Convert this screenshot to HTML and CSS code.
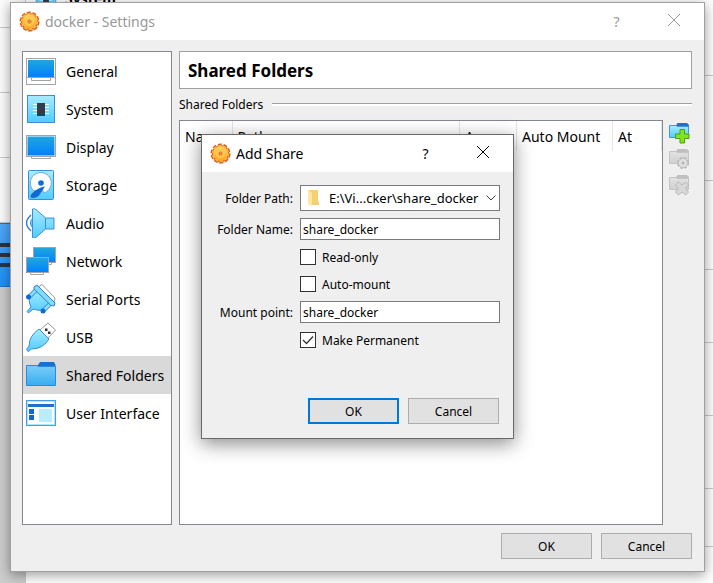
FILE: index.html
```html
<!DOCTYPE html>
<html lang="en">
<head>
  <meta charset="UTF-8">
  <meta name="viewport" content="width=device-width, initial-scale=1.0">
  <title>docker - Settings</title>
  <link rel="stylesheet" href="styles.css">
</head>
<body>
  <!-- shared icon shapes -->
  <svg class="defs" aria-hidden="true">
    <defs>
      <linearGradient id="screen" x1="0" y1="0" x2="0" y2="1">
        <stop offset="0" stop-color="#20a8dc"/><stop offset="1" stop-color="#0080ff"/>
      </linearGradient>
      <linearGradient id="sky" x1="0" y1="0" x2="0" y2="1">
        <stop offset="0" stop-color="#a8ecff"/><stop offset="1" stop-color="#50ccff"/>
      </linearGradient>
      <linearGradient id="folder" x1="0" y1="0" x2="0" y2="1">
        <stop offset="0" stop-color="#7cccf6"/><stop offset="1" stop-color="#36aef0"/>
      </linearGradient>
      <linearGradient id="gray" x1="0" y1="0" x2="0" y2="1">
        <stop offset="0" stop-color="#e2e2e2"/><stop offset="1" stop-color="#d0d0d0"/>
      </linearGradient>
      <linearGradient id="gold" x1="0" y1="0" x2="0" y2="1">
        <stop offset="0" stop-color="#ffd860"/><stop offset="1" stop-color="#ffa428"/>
      </linearGradient>
    </defs>
    <symbol id="gear" viewBox="0 0 20 20">
      <circle cx="10.500" cy="11" r="9" fill="#a8a09c" opacity=".4"/>
      <circle cx="10" cy="10" r="8.200" fill="#dc5c14"/>
      <circle cx="10" cy="10" r="8.600" fill="none" stroke="#dc5c14" stroke-width="1.800" stroke-dasharray="3.600 1.800"/>
      <circle cx="10" cy="10" r="7.200" fill="url(#gold)"/>
      <circle cx="10" cy="10" r="7.400" fill="none" stroke="#ffb840" stroke-width="1.600" stroke-dasharray="2.800 1.850"/>
      <circle cx="10" cy="10" r="4.500" fill="#ffcc50" opacity=".7"/>
      <circle cx="10" cy="10" r="1.500" fill="#e89860" stroke="#d06418" stroke-width=".8"/>
    </symbol>
    <symbol id="chip" viewBox="0 0 30 30">
      <rect x="1.500" y="1.500" width="27" height="27" fill="url(#sky)" stroke="#3c8cdc"/>
      <path d="M7 10.500h16M7 13.500h16M7 16.500h16M7 19.500h16" stroke="#f0fcff"/>
      <rect x="11" y="9" width="8" height="13" fill="#343c48"/>
    </symbol>
  </svg>

  <!-- manager window behind the dialogs -->
  <div class="manager" aria-hidden="true">
    <div class="machines">
      <div class="machine"></div>
      <div class="machine"></div>
      <div class="machine"></div>
      <div class="machine"></div>
      <div class="machine selected"><i></i><i></i><i></i></div>
    </div>
    <div class="details">
      <div class="detail-title"><svg class="detail-icon"><use href="#chip"/></svg><b>System</b></div>
      <div class="detail detail-a"></div>
      <div class="detail detail-b"></div>
      <div class="detail detail-c"></div>
      <div class="detail detail-d"></div>
      <div class="detail detail-e"></div>
      <div class="detail detail-f"></div>
    </div>
  </div>

  <main class="settings">
    <header class="titlebar inactive">
      <svg class="title-icon"><use href="#gear"/></svg>
      <h1 class="title">docker - Settings</h1>
      <button class="title-button" type="button">?</button>
      <button class="title-button" type="button" aria-label="Close">
        <svg class="cross" viewBox="0 0 14 14"><path d="M1 1l12 12M13 1L1 13"/></svg>
      </button>
    </header>

    <div class="content">
      <nav class="categories">
        <a class="category" href="#general">
          <svg class="cat-icon" viewBox="0 0 30 30"><rect x=".5" y="2.500" width="29" height="26" fill="#fff" stroke="#a4a4a4"/><rect x="2" y="4" width="26" height="17" fill="url(#screen)"/><path d="M1 21.500h28M5.500 22v2.500h19V22" fill="none" stroke="#a4a4a4"/></svg>
          General
        </a>
        <a class="category" href="#system"><svg class="cat-icon"><use href="#chip"/></svg>System</a>
        <a class="category" href="#display">
          <svg class="cat-icon" viewBox="0 0 30 30"><path d="M5.500 23v3.500h19V23" fill="#fff" stroke="#a4a4a4"/><rect x=".5" y="3.500" width="29" height="21" fill="#fff" stroke="#a4a4a4"/><rect x="1.500" y="4.500" width="27" height="19" fill="url(#screen)"/></svg>
          Display
        </a>
        <a class="category" href="#storage">
          <svg class="cat-icon" viewBox="0 0 30 30"><rect x="2.500" y=".5" width="25" height="29" rx="1" fill="url(#sky)" stroke="#3c8cdc"/><path d="M8 21a10.500 10.500 0 1 1 10 2L16 19z" fill="#fff" stroke="#70a8d8"/><circle cx="15" cy="13" r="2.800" fill="#1070d0"/><path d="M19 16.500q-7 1-13 7-3 3 0 4.500 6 0 8-4z" fill="#1068d0"/></svg>
          Storage
        </a>
        <a class="category" href="#audio">
          <svg class="cat-icon" viewBox="0 0 30 30"><path d="M7 10q-5 5 0 10" fill="url(#sky)" stroke="#2c80d8"/><path d="M5 7q-9 8 0 16" fill="none" stroke="#2c80d8" stroke-width="1.500"/><path d="M6.500 1q2-1 4 1l9 8h8.500v11h-8.500l-9 8q-2 2-4 .5z" fill="url(#sky)" stroke="#3c8cdc" stroke-linejoin="round"/><path d="M19.500 10v11" stroke="#3c8cdc"/></svg>
          Audio
        </a>
        <a class="category" href="#network">
          <svg class="cat-icon" viewBox="0 0 30 30"><path d="M12.500 16v2.500h13V16" fill="#fff" stroke="#a4a4a4"/><rect x="7.500" y="1.500" width="22" height="15" fill="url(#screen)" stroke="#a4a4a4"/><path d="M4.500 26v2.500h13V26" fill="#fff" stroke="#a4a4a4"/><rect x=".5" y="11.500" width="22" height="15" fill="url(#screen)" stroke="#a4a4a4"/></svg>
          Network
        </a>
        <a class="category" href="#serial-ports">
          <svg class="cat-icon" viewBox="0 0 30 30"><path d="M12 3l4-2.500L29 14l-1 6z" fill="#fff" stroke="#989898"/><path d="M10 5L3 13q0 7 2 10l-4 4.500L2.500 29 7 25q5 2 10 1l8-6z" fill="url(#sky)" stroke="#3c8cdc" stroke-linejoin="round"/><path d="M10 6l-7 7M24 20l-7 7" stroke="#3c8cdc" stroke-width="4.500"/><path d="M10 6l-6 6M24 20l-6 6" stroke="#88e0ff" stroke-width="2.500"/><path d="M8 3l3-2 18 18-1 3-3-.5L8 5z" fill="#80dcff" stroke="#2c80d8" stroke-linejoin="round"/><circle cx="2.500" cy="13" r="2.500" fill="#1068d0"/><circle cx="17" cy="27" r="2.500" fill="#1068d0"/></svg>
          Serial Ports
        </a>
        <a class="category" href="#usb">
          <svg class="cat-icon" viewBox="0 0 30 30"><path d="M14 8l8-7 7.500 7-7.500 8z" fill="#fff" stroke="#989898"/><path d="M19 6.500h2.500V9H19zM22 9.500h2.500V12H22z" fill="#303030"/><path d="M13 7Q3 14 3 24l-2.500 3.500L2 29.500 5.500 27Q17 27 23 17z" fill="url(#sky)" stroke="#3c8cdc" stroke-linejoin="round"/></svg>
          USB
        </a>
        <a class="category current" href="#shared-folders">
          <svg class="cat-icon" viewBox="0 0 30 30"><path d="M10.500 7l3.500-5h14l1.500 3v3z" fill="#1870d0"/><path d="M.5 5.500h10.500l1.500 1h17v19H.5z" fill="url(#folder)" stroke="#2c88dc"/></svg>
          Shared Folders
        </a>
        <a class="category" href="#user-interface">
          <svg class="cat-icon" viewBox="0 0 30 30"><rect x=".5" y="2.500" width="29" height="25" fill="#fff" stroke="#4c9ce4"/><rect x="1.500" y="3.500" width="27" height="23" fill="none" stroke="#a8e8ff"/><path d="M2 6h26v3H2z" fill="#2070d0"/><path d="M3 11h5v5H3zM3 17h5v5H3z" fill="#1068d0"/><rect x="13" y="11" width="13" height="13" fill="#b8ecff"/></svg>
          User Interface
        </a>
      </nav>

      <section class="page">
        <h2 class="page-title">Shared Folders</h2>
        <div class="group-title">Shared Folders</div>
        <div class="folders">
          <div class="folder-list">
            <table class="folder-table">
              <thead>
                <tr><th class="col-name">Name</th><th>Path</th><th class="col-access">Access</th><th class="col-auto">Auto Mount</th><th class="col-at">At</th></tr>
              </thead>
            </table>
          </div>
          <div class="tools">
            <button class="tool" type="button" aria-label="Add share">
              <svg viewBox="0 0 22 22"><path class="tab" d="M7.500 4l2-3h9.500l2 2v3h-12z"/><path class="front" d="M1.500 3.500h6.500l1.500 1h11v11h-19z"/><path d="M12 7.500h4.500v4.500h4.500v4.500h-4.500v4.500H12v-4.500H7.500V12H12z" fill="#84e41c" stroke="#48a010"/></svg>
            </button>
            <button class="tool" type="button" aria-label="Edit share" disabled>
              <svg viewBox="0 0 22 22"><path class="tab" d="M7.500 4l2-3h9.500l2 2v3h-12z"/><path class="front" d="M1.500 3.500h6.500l1.500 1h11v11h-19z"/><circle cx="15" cy="15" r="5" fill="#dedede" stroke="#b4b4b4" stroke-width="2" stroke-dasharray="2.400 1.527"/><circle cx="15" cy="15" r="4.600" fill="#dedede" stroke="#bcbcbc" stroke-width=".6"/><circle cx="15" cy="15" r="1.300" fill="#b0b0b0"/></svg>
            </button>
            <button class="tool" type="button" aria-label="Remove share" disabled>
              <svg viewBox="0 0 22 22"><path class="tab" d="M7.500 4l2-3h9.500l2 2v3h-12z"/><path class="front" d="M1.500 3.500h6.500l1.500 1h11v11h-19z"/><path d="M10.500 8l3.500 3 3.500-3 3 3-3 3.500 3 3.500-3 3-3.500-3-3.500 3-3-3 3-3.500-3-3.500z" fill="#d8d8d8" stroke="#b8b8b8"/></svg>
            </button>
          </div>
        </div>
      </section>
    </div>

    <footer class="actions">
      <button class="button" type="button">OK</button>
      <button class="button" type="button">Cancel</button>
    </footer>
  </main>

  <form class="dialog" role="dialog" aria-labelledby="dialogTitle">
    <header class="titlebar">
      <svg class="title-icon"><use href="#gear"/></svg>
      <h2 class="title" id="dialogTitle">Add Share</h2>
      <button class="title-button" type="button">?</button>
      <button class="title-button" type="button" aria-label="Close">
        <svg class="cross" viewBox="0 0 14 14"><path d="M1 1l12 12M13 1L1 13"/></svg>
      </button>
    </header>
    <div class="fields">
      <label class="label" for="folderPath">Folder Path:</label>
      <div class="path">
        <svg class="path-icon" viewBox="0 0 14 16"><path d="M2 0h9v11l1 1v3H2z" fill="#f4d070"/><path d="M1 0l4 3v13l-4-2z" fill="#ffe8a0"/></svg>
        <select class="input path-select" id="folderPath"><option>E:\Vi...cker\share_docker</option></select>
        <svg class="path-arrow" viewBox="0 0 10 6"><path d="M.5.5L5 5 9.500.5"/></svg>
      </div>
      <label class="label" for="folderName">Folder Name:</label>
      <input class="input" type="text" id="folderName" value="share_docker">
      <label class="check"><input type="checkbox">Read-only</label>
      <label class="check"><input type="checkbox">Auto-mount</label>
      <label class="label" for="mountPoint">Mount point:</label>
      <input class="input" type="text" id="mountPoint" value="share_docker">
      <label class="check"><input type="checkbox" checked>Make Permanent</label>
    </div>
    <footer class="actions">
      <button class="button default" type="button">OK</button>
      <button class="button" type="button">Cancel</button>
    </footer>
  </form>
</body>
</html>
```

FILE: styles.css
```css
* {
  box-sizing: border-box;
}
body {
  display: flex;
  min-height: 100vh;
  margin: 0;
  padding: 2px 8px 11px 10px;
  overflow: hidden;
  background: #fafafa;
  font-family: "Noto Sans", sans-serif;
  font-size: 12px;
  color: #000;
}
h1, h2 {
  margin: 0;
}
.defs {
  position: absolute;
  width: 0;
  height: 0;
}

/* window behind */
.manager {
  position: absolute;
  inset: 0;
  display: flex;
  background: #fff;
}
.machines {
  width: 26px;
  border-right: 1px solid #c8c8c8;
  background: #cdcdcd;
}
.machine {
  height: 65px;
  border-bottom: 1px solid #c8c8c8;
  background: #fcfcfc;
}
.machine:first-child {
  height: 28px;
}
.machine.selected {
  display: flex;
  flex-direction: column;
  justify-content: center;
  gap: 6px;
  height: 64px;
  border-top: 1px solid #1478d0;
  border-bottom: 1px solid #1478d0;
  background: linear-gradient(#50a8f8, #1c90f8);
}
.machine i {
  height: 4px;
  background: #2c3440;
}
.details {
  flex: 1;
}
.detail-title {
  display: flex;
  align-items: end;
  gap: 8px;
  height: 8px;
  padding-left: 9px;
  font-size: 14px;
  line-height: 18px;
}
.detail-icon {
  width: 22px;
  height: 22px;
  flex: none;
}
.detail {
  border-bottom: 1px solid #c8c8c8;
}
.detail-a { height: 68px; }
.detail-b { height: 105px; }
.detail-c { height: 89px; }
.detail-d { height: 73px; }
.detail-e { height: 73px; }
.detail-f { height: 73px; }
.detail-f::after {
  content: "";
  display: block;
  height: 130px;
  border-bottom: 1px solid #c8c8c8;
}

/* windows */
.settings {
  position: relative;
  display: flex;
  flex: 1;
  flex-direction: column;
  border: 1px solid #a0a0a0;
  background: #efefef;
  box-shadow: 0 3px 12px rgba(0, 0, 0, 0.4);
}
.titlebar {
  display: flex;
  align-items: center;
  height: 37px;
  padding: 0 2px 0 8px;
  background: #fff;
}
.titlebar.inactive {
  color: #989898;
}
.title-icon {
  width: 21px;
  height: 21px;
}
.title {
  flex: 1;
  margin-left: 5px;
  font-size: 14px;
  font-weight: normal;
}
.title-button {
  width: 57px;
  height: 36px;
  padding: 0;
  border: 0;
  background: none;
  color: inherit;
  font: inherit;
  font-size: 14px;
}
.cross {
  width: 14px;
  height: 14px;
  fill: none;
  stroke: currentColor;
}
.content {
  display: flex;
  flex: 1;
  gap: 7px;
  padding: 11px 12px 0 11px;
}
.categories {
  width: 150px;
  border: 1px solid #828790;
  background: #fff;
}
.category {
  display: flex;
  align-items: center;
  gap: 10px;
  height: 38px;
  padding-left: 3px;
  color: #000;
  font-size: 14px;
  text-decoration: none;
  white-space: nowrap;
}
.category.current {
  background: #d9d9d9;
}
.cat-icon {
  flex: none;
  width: 30px;
  height: 30px;
}
.page {
  display: flex;
  flex: 1;
  flex-direction: column;
}
.page-title {
  height: 38px;
  padding-left: 8px;
  border: 1px solid #a0a0a0;
  background: #fff;
  font-size: 17px;
  line-height: 38px;
}
.group-title {
  display: flex;
  align-items: center;
  gap: 9px;
  height: 31px;
}
.group-title::after {
  content: "";
  flex: 1;
  height: 2px;
  border-top: 1px solid #a0a0a0;
  background: #fff;
}
.folders {
  display: flex;
  flex: 1;
}
.folder-list {
  flex: 1;
  border: 1px solid #828790;
  background: #fff;
}
.folder-table {
  width: 100%;
  table-layout: fixed;
  border-collapse: collapse;
  font-size: 14px;
}
.folder-table th {
  height: 30px;
  padding: 0 0 0 5px;
  border-right: 1px solid #e5e5e5;
  font-weight: normal;
  text-align: left;
}
.col-name { width: 52px; }
.col-access { width: 57px; }
.col-auto { width: 96px; }
.col-at { width: 49px; }
.tools {
  display: flex;
  flex-direction: column;
  gap: 4px;
  width: 29px;
  padding: 2px 0 0 5px;
}
.tool {
  width: 22px;
  height: 22px;
  padding: 0;
  border: 0;
  background: none;
}
.tool svg {
  display: block;
}
.tab {
  fill: #2070d0;
}
.front {
  fill: url(#sky);
  stroke: #3c98e0;
}
.tool:disabled .tab {
  fill: #c0c0c0;
}
.tool:disabled .front {
  fill: url(#gray);
  stroke: #c4c4c4;
}
.actions {
  display: flex;
  justify-content: flex-end;
  gap: 9px;
  padding: 8px 12px 12px;
}
.button {
  width: 91px;
  height: 26px;
  padding: 0;
  border: 1px solid #adadad;
  background: #e1e1e1;
  color: #000;
  font: inherit;
}
.button.default {
  border: 2px solid #0078d7;
}

/* add share dialog */
.dialog {
  position: absolute;
  top: 134px;
  left: 201px;
  width: 313px;
  border: 1px solid #686868;
  background: #efefef;
  box-shadow: 0 5px 18px rgba(0, 0, 0, 0.45);
}
.fields {
  display: grid;
  grid-template-columns: 91px 1fr;
  gap: 7px;
  align-items: center;
  padding: 13px 13px 0 0;
}
.label {
  text-align: right;
}
.path {
  position: relative;
}
.input {
  width: 100%;
  height: 22px;
  padding: 0 2px;
  border: 1px solid #7a7a7a;
  border-radius: 0;
  background: #fff;
  color: #000;
  font: inherit;
}
.path-select {
  display: block;
  height: 26px;
  padding-left: 28px;
  font-size: 13px;
  appearance: none;
}
.path-icon {
  position: absolute;
  top: 5px;
  left: 7px;
  width: 14px;
  height: 16px;
}
.path-arrow {
  position: absolute;
  top: 10px;
  right: 4px;
  width: 10px;
  height: 6px;
  fill: none;
  stroke: #404040;
}
.check {
  display: flex;
  grid-column: 2;
  align-items: center;
  gap: 6px;
  height: 20px;
}
.check input {
  width: 16px;
  height: 16px;
  margin: 0;
  border: 1px solid #333;
  background: #fff;
  appearance: none;
}
.check input:checked {
  background: #fff url("data:image/svg+xml,%3Csvg xmlns='http://www.w3.org/2000/svg' viewBox='0 0 14 14'%3E%3Cpath d='M2 7l3.500 3.500L12 3.500' fill='none' stroke='%23333' stroke-width='1.300'/%3E%3C/svg%3E");
}
.dialog .actions {
  padding: 48px 14px 14px;
}
```
